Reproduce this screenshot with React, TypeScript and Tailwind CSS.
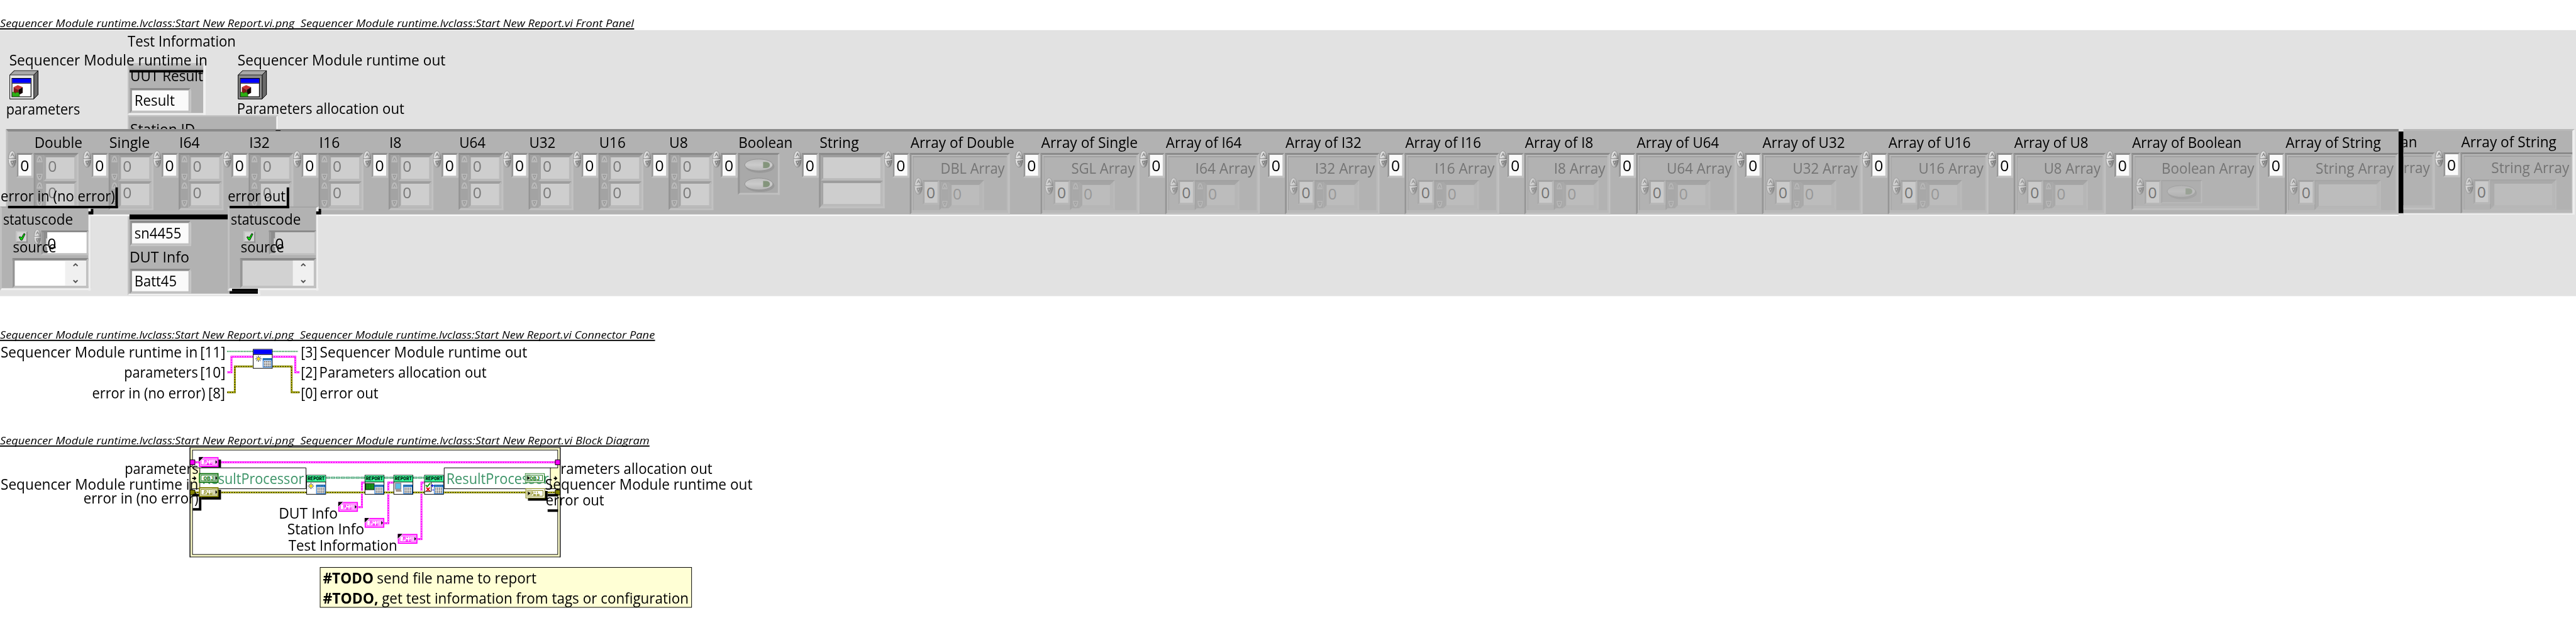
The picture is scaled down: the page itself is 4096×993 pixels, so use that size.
import { useLayoutEffect, useRef } from "react";
import type { ReactNode } from "react";

/** One line of text stretched to the width of its box. */
function Label({ at, children, tone = "text-black", font = "font-['Open_Sans',sans-serif] text-[23.5px]" }: { at: string; children: ReactNode; tone?: string; font?: string }) {
  const box = useRef<HTMLDivElement>(null);
  const ink = useRef<HTMLSpanElement>(null);
  useLayoutEffect(() => {
    if (box.current && ink.current) {
      const ratio = box.current.clientWidth / ink.current.offsetWidth;
      ink.current.style.transform = `scaleX(${ratio})`;
    }
  });
  return (
    <div ref={box} className={`h-[24px] shrink-0 whitespace-nowrap leading-[24px] ${font} ${tone} ${at}`}>
      <span ref={ink} className="inline-block origin-left">{children}</span>
    </div>
  );
}

function Title({ children, width }: { children: string; width: string }) {
  return (
    <div className={`${width} h-[20px] shrink-0 border-b-2 border-black`}>
      <Label at="w-full -mt-[3px]" font="font-['Open_Sans',sans-serif] italic text-[17.5px]">{children}</Label>
    </div>
  );
}

const SUNK = "border-t-[#8a8a8a] border-l-[#959595] border-r-[#c1c1c1] border-b-[#c1c1c1]";
const SUNK_SOFT = "border-t-[#9d9d9d] border-l-[#a5a5a5] border-r-[#bababa] border-b-[#bababa]";

function Spinner({ size = "w-[14px] h-[28px]" }: { size?: string }) {
  return (
    <svg viewBox="0 0 14 28" preserveAspectRatio="none" className={`${size} block shrink-0`}>
      <defs>
        <linearGradient id="spin" x1="0" x2="1" y1="0" y2="0.4">
          <stop offset="0" stopColor="#b5b5b5" />
          <stop offset="0.35" stopColor="#e2e2e2" />
          <stop offset="0.7" stopColor="#bdbdbd" />
          <stop offset="1" stopColor="#777" />
        </linearGradient>
      </defs>
      <ellipse cx="7" cy="14" rx="6.5" ry="13.5" fill="url(#spin)" stroke="#8b8b8b" strokeWidth="0.8" />
      <path d="M1 13.4H13" stroke="#777" />
      <path d="M1 14.6H13" stroke="#eee" />
      <path d="M4.5 10L7 4.5L9.5 10" fill="none" stroke="#6a6a6a" strokeWidth="1" />
      <path d="M4.5 10H9.5" stroke="#f4f4f4" strokeWidth="1" />
      <path d="M9.5 17.5L7 23L4.5 17.5Z" fill="none" stroke="#6a6a6a" strokeWidth="1" />
    </svg>
  );
}

function SplitSpinner({ size }: { size: string }) {
  return (
    <svg viewBox="0 0 14 44" preserveAspectRatio="none" className={`${size} block shrink-0`}>
      <rect width="14" height="44" fill="#a3a3a3" />
      <path d="M1 13Q2 1 7 1Q12 1 13 13Z" fill="#b9b9b9" stroke="#999" strokeWidth="0.6" />
      <path d="M1 31Q2 43 7 43Q12 43 13 31Z" fill="#b9b9b9" stroke="#999" strokeWidth="0.6" />
      <path d="M4.5 10L7 5L9.5 10" fill="none" stroke="#8e8e8e" />
      <path d="M4.5 34H9.5L7 39Z" fill="none" stroke="#8e8e8e" />
    </svg>
  );
}

function Switch() {
  return (
    <svg viewBox="0 0 50 24" className="block h-[24px] w-[50px]">
      <defs>
        <linearGradient id="pill" x1="0" x2="0" y1="0" y2="1">
          <stop offset="0" stopColor="#bcbcbc" />
          <stop offset="0.5" stopColor="#cbcbcb" />
          <stop offset="1" stopColor="#b4b4b4" />
        </linearGradient>
      </defs>
      <ellipse cx="26" cy="13" rx="23.5" ry="10.5" fill="#999" />
      <ellipse cx="24" cy="10.5" rx="22.8" ry="9.6" fill="url(#pill)" stroke="#929292" />
      <path d="M31 5.5H36Q42 6 42 10.5Q42 15 36 15.5H31Z" fill="#84957c" />
    </svg>
  );
}

function Index() {
  return (
    <>
      <div className="-mt-[4px]"><Spinner /></div>
      <div className={`flex h-[40px] w-[27px] shrink-0 border-[3px] ${SUNK} bg-[#fafafa] pl-[3px] pt-[6px]`}>
        <Label at="w-[14px]">0</Label>
      </div>
    </>
  );
}

function NumberRow() {
  return (
    <div className="flex h-[43px]">
      <SplitSpinner size="w-[13px] h-[43px]" />
      <div className={`h-[43px] w-[54px] border-[4px] ${SUNK_SOFT} bg-[#cecece] pl-[3px] pt-[3px]`}>
        <Label at="w-[14px]" tone="text-[#7a7a7a]">0</Label>
      </div>
    </div>
  );
}

function SubIndex() {
  return (
    <>
      <div className="-mt-[4px]"><Spinner /></div>
      <div className="h-[40px] w-[27px] shrink-0 border-[3px] border-t-[#9d9d9d] border-l-[#a5a5a5] border-r-[#bababa] border-b-[#bababa] bg-[#d4d4d4] pl-[3px] pt-[6px]">
        <Label at="w-[14px]" tone="text-[#5c5c5c]">0</Label>
      </div>
    </>
  );
}

type Kind = "num" | "bool" | "str" | "anum" | "abool" | "astr";

function Element({ kind, box, sub, subW }: { kind: Kind; box: string; sub?: string; subW?: string }) {
  if (kind === "num")
    return (
      <div className={`h-[93px] w-[73px] shrink-0 border-[3px] ${SUNK}`}>
        <NumberRow />
        <NumberRow />
      </div>
    );
  if (kind === "bool")
    return (
      <div className={`flex h-[68px] w-[68px] shrink-0 flex-col gap-[7px] border-[3px] ${SUNK} bg-[#a9a9a9] pl-[7px] pt-[6px]`}>
        <Switch />
        <Switch />
      </div>
    );
  if (kind === "str")
    return (
      <div className={`h-[90px] w-[107px] shrink-0 border-[3px] ${SUNK}`}>
        <div className={`h-[42px] w-full border-[4px] ${SUNK_SOFT} bg-[#cecece]`} />
        <div className={`h-[42px] w-full border-[4px] ${SUNK_SOFT} bg-[#cecece]`} />
      </div>
    );
  return (
    <div className={`${box} shrink-0 border-[3px] ${SUNK}`}>
      <div className="flex h-full w-full flex-col border-2 border-b-4 border-t-[#bbb] border-l-[#bbb] border-r-[#bbb] border-b-[#b8b8b8]">
        <div className="flex h-full flex-col border-t-2 border-l border-t-[#a0a0a0] border-l-[#a0a0a0]">
          <div className="flex justify-end pr-[3px] pt-[6px]">
            <Label at={subW ?? ""} tone="text-[#747474]">{sub}</Label>
          </div>
          <div className="mt-[7px] flex opacity-80">
            <div className="flex opacity-90 pl-[1px]"><SubIndex /></div>
            {kind === "anum" && (
              <div className="flex h-[49px] w-[73px] border-[3px] border-t-[#999] border-l-[#9d9d9d] border-r-[#bebebe] border-b-[#bbb] opacity-80">
                <SplitSpinner size="w-[12px] h-[43px]" />
                <div className={`h-[43px] w-[55px] border-[5px] ${SUNK_SOFT} bg-[#c2c2c2] pl-[2px] pt-[3px]`}>
                  <Label at="w-[14px]" tone="text-[#8a8a8a]">0</Label>
                </div>
              </div>
            )}
            {kind === "abool" && (
              <div className="h-[38px] w-[67px] border-2 border-t-[#a2a2a2] border-l-[#a2a2a2] border-r-[#bebebe] border-b-[#bbb] bg-[#adadad] pl-[7px] pt-[6px]">
                <div className="opacity-60"><Switch /></div>
              </div>
            )}
            {kind === "astr" && (
              <div className="h-[49px] w-[108px] border-2 border-t-[#a2a2a2] border-l-[#a2a2a2] border-r-[#bebebe] border-b-[#bbb]">
                <div className="h-full w-full border-[5px] border-t-[#a8a8a8] border-l-[#aaa] border-r-[#b8b8b8] border-b-[#b8b8b8] bg-[#bebebe]" />
              </div>
            )}
          </div>
        </div>
      </div>
    </div>
  );
}

interface CellSpec { name: string; w: string; lw: string; kind: Kind; box?: string; sub?: string; subW?: string }

const CELLS: CellSpec[] = [
  { name: "Double", w: "w-[122px]", lw: "w-[78px]", kind: "num" },
  { name: "Single", w: "w-[114px]", lw: "w-[66px]", kind: "num" },
  { name: "I64", w: "w-[114px]", lw: "w-[33px]", kind: "num" },
  { name: "I32", w: "w-[114px]", lw: "w-[33px]", kind: "num" },
  { name: "I16", w: "w-[114px]", lw: "w-[33px]", kind: "num" },
  { name: "I8", w: "w-[114px]", lw: "w-[20px]", kind: "num" },
  { name: "U64", w: "w-[114px]", lw: "w-[43px]", kind: "num" },
  { name: "U32", w: "w-[114px]", lw: "w-[43px]", kind: "num" },
  { name: "U16", w: "w-[114px]", lw: "w-[43px]", kind: "num" },
  { name: "U8", w: "w-[113px]", lw: "w-[31px]", kind: "num" },
  { name: "Boolean", w: "w-[132px]", lw: "w-[88px]", kind: "bool" },
  { name: "String", w: "w-[148px]", lw: "w-[64px]", kind: "str" },
  { name: "Array of Double", w: "w-[213px]", lw: "w-[169px]", kind: "anum", box: "h-[100px] w-[163px]", sub: "DBL Array", subW: "w-[105px]" },
  { name: "Array of Single", w: "w-[203px]", lw: "w-[157px]", kind: "anum", box: "h-[100px] w-[161px]", sub: "SGL Array", subW: "w-[103px]" },
  { name: "Array of I64", w: "w-[195px]", lw: "w-[124px]", kind: "anum", box: "h-[100px] w-[154px]", sub: "I64 Array", subW: "w-[97px]" },
  { name: "Array of I32", w: "w-[195px]", lw: "w-[124px]", kind: "anum", box: "h-[100px] w-[154px]", sub: "I32 Array", subW: "w-[97px]" },
  { name: "Array of I16", w: "w-[195px]", lw: "w-[124px]", kind: "anum", box: "h-[100px] w-[154px]", sub: "I16 Array", subW: "w-[97px]" },
  { name: "Array of I8", w: "w-[182px]", lw: "w-[111px]", kind: "anum", box: "h-[100px] w-[140px]", sub: "I8 Array", subW: "w-[84px]" },
  { name: "Array of U64", w: "w-[205px]", lw: "w-[134px]", kind: "anum", box: "h-[100px] w-[164px]", sub: "U64 Array", subW: "w-[106px]" },
  { name: "Array of U32", w: "w-[205px]", lw: "w-[134px]", kind: "anum", box: "h-[100px] w-[164px]", sub: "U32 Array", subW: "w-[106px]" },
  { name: "Array of U16", w: "w-[205px]", lw: "w-[134px]", kind: "anum", box: "h-[100px] w-[164px]", sub: "U16 Array", subW: "w-[106px]" },
  { name: "Array of U8", w: "w-[192px]", lw: "w-[121px]", kind: "anum", box: "h-[100px] w-[150px]", sub: "U8 Array", subW: "w-[93px]" },
  { name: "Array of Boolean", w: "w-[250px]", lw: "w-[178px]", kind: "abool", box: "h-[93px] w-[208px]", sub: "Boolean Array", subW: "w-[151px]" },
  { name: "Array of String", w: "w-[228px]", lw: "w-[155px]", kind: "astr", box: "h-[100px] w-[185px]", sub: "String Array", subW: "w-[127px]" },
];

function Cell({ cell }: { cell: CellSpec }) {
  return (
    <div className={`${cell.w} flex shrink-0 flex-col`}>
      <Label at={`${cell.lw} ml-[43px] mt-[6px]`}>{cell.name}</Label>
      <div className="mt-[5px] flex">
        <Index />
        <div className="w-px shrink-0" />
        <Element kind={cell.kind} box={cell.box ?? ""} sub={cell.sub} subW={cell.subW} />
      </div>
    </div>
  );
}

function ParameterStrip() {
  return (
    <div className="absolute left-[10px] top-[161px] flex h-[142px] w-[4186px]">
      <div className="flex h-[142px] w-[3897px] shrink-0 overflow-hidden border-l-[3px] border-t-4 border-b-[3px] border-l-[#bdbdbd] border-t-[#8a8a8a] border-b-[#f8f8f8] bg-[#b2b2b2]">
        {CELLS.map((c) => <Cell key={c.name} cell={c} />)}
      </div>
      <div className="mt-[4px] h-[133px] w-[8px] shrink-0 bg-black" />
      <div className="h-[140px] w-[279px] shrink-0 overflow-hidden border-r-4 border-t-[3px] border-b-[3px] border-t-[#b9b9b9] border-r-[#efefef] border-b-[#f0f0f0] bg-[#b2b2b2]">
        <div className="-ml-[199px] flex">
          <Cell cell={CELLS[22]} />
          <Cell cell={CELLS[23]} />
        </div>
      </div>
    </div>
  );
}

function CubeIcon({ face }: { face: string }) {
  return (
    <svg viewBox="0 0 48 48" className="block h-[48px] w-[48px]">
      <path d="M1 8L8 1H47V40L40 47H1Z" fill="#777" stroke="#000" />
      <path d="M2 8L9 1.5H46L40 8Z" fill="#a8a8a8" />
      <path d="M40 8L47 1V40L40 47Z" fill="#6b6b6b" stroke="#000" />
      <path d="M1 8H40V47H1Z" fill={face} stroke="#000" strokeWidth="0.8" />
      <path d="M4.500 13.500H35.500V43.500H4.500Z" fill="#fff" stroke="#000" strokeWidth="1.200" />
      <path d="M5 14H35V21H5Z" fill="#00f" />
      <path d="M5 21.500H35" stroke="#000" strokeWidth="1.200" />
      <path d="M7 28L14 24.500L22 28L15 32Z" fill="#c83232" />
      <path d="M7 28L15 32V40L7 37Z" fill="#861a1a" />
      <path d="M15 32L22 28V37L15 41Z" fill="#160505" />
      <path d="M5 36H8L10 38L12 36L16 37L17 43H5Z" fill="#2db014" stroke="#0a5a00" strokeWidth="0.600" />
    </svg>
  );
}

function Check() {
  return (
    <div className="flex h-[19px] w-[19px] items-center justify-center border-2 border-t-[#c2c2c2] border-l-[#c2c2c2] border-r-[#8f8f8f] border-b-[#8f8f8f] bg-[#d4d4d4]">
      <svg viewBox="0 0 12 13" className="h-[13px] w-[12px]">
        <path d="M1 7L3 6L5 8L9 1L11 2L6 12H4Z" fill="#00e000" stroke="#000" strokeWidth="0.9" />
      </svg>
    </div>
  );
}

function ScrollColumn() {
  return (
    <div className="flex h-full w-[34px] flex-col items-center justify-between bg-[#f0f0f0] py-[4px]">
      <svg viewBox="0 0 8 6" className="h-[6px] w-[8px]"><path d="M0.500 5L4 1.500L7.500 5" fill="none" stroke="#505050" strokeWidth="2" /></svg>
      <svg viewBox="0 0 8 6" className="h-[6px] w-[8px]"><path d="M0.500 1L4 4.500L7.500 1" fill="none" stroke="#505050" strokeWidth="2" /></svg>
    </div>
  );
}

function ErrorCluster({ at, fill, spinner }: { at: string; fill: string; spinner: boolean }) {
  return (
    <div className={`absolute h-[137px] w-[148px] border-l-[3px] border-r-4 border-b-4 border-t-2 border-l-[#c2c2c2] border-t-[#a5a5a5] border-r-[#efefef] border-b-[#efefef] bg-[#b2b2b2] ${at}`}>
      <div className="relative h-full w-full">
        <Label at="absolute left-[2px] top-[7px] w-[62px]">status</Label>
        <Label at="absolute left-[64px] top-[7px] w-[52px]">code</Label>
        <div className="absolute left-[23px] top-[38px]"><Check /></div>
        {spinner && <div className="absolute left-[52px] top-[35px]"><Spinner size="w-[12px] h-[25px]" /></div>}
        <div className={`absolute left-[64px] top-[37px] flex h-[40px] w-[77px] border-[3px] ${SUNK} ${fill}`}>
          <div className="flex h-full w-[7px] items-center justify-end bg-[#8d8d8d]">
            <div className="h-[14px] w-[2px] bg-[#d8d8d8]" />
          </div>
          <Label at="mt-[7px] w-[14px]">0</Label>
        </div>
        <div className={`absolute left-[17px] top-[82px] flex h-[49px] w-[124px] justify-end border-[4px] ${SUNK} ${fill}`}>
          <ScrollColumn />
        </div>
        <Label at="absolute left-[18px] top-[52px] w-[71px]">source</Label>
      </div>
    </div>
  );
}

function Field({ at, children }: { at: string; children: ReactNode }) {
  return <div className={`absolute h-[41px] w-[99px] border-[4px] border-l-[3px] ${SUNK} bg-[#fafafa] pl-[4px] pt-[4px] ${at}`}>{children}</div>;
}

/** The panel's free canvas; its origin is at y = 49 of the page. */
function FrontPanel() {
  return (
    <div className="relative h-[433px] w-[4196px] shrink-0 overflow-hidden bg-[#e2e2e2]">
      <div className="absolute left-[208px] top-[54px] h-[84px] w-[127px] border-r-4 border-b-[3px] border-l-2 border-l-[#c4c4c4] border-r-[#f1f1f1] border-b-[#f1f1f1] bg-[#b2b2b2]">
        <Label at="absolute left-[2px] top-[8px] w-[119px]">UUT Result</Label>
        <div className="absolute left-0 top-0 h-[11px] w-[121px] bg-linear-to-b from-[#c8c8c8] to-[#a8a8a8]" />
        <div className="absolute left-px top-[11px] h-[4px] w-[120px] bg-black" />
      </div>
      <Field at="left-[212px] top-[94px]"><Label at="w-[66px]">Result</Label></Field>
      <div className="absolute left-[208px] top-[139px] h-[26px] w-[245px] border-l-2 border-r-[3px] border-t-2 border-l-[#c4c4c4] border-t-[#c0c0c0] border-r-[#f1f1f1] bg-[#b2b2b2]">
        <Label at="absolute left-[2px] top-[8px] w-[106px]">Station ID</Label>
      </div>

      <Label at="absolute left-[208px] top-[6px] w-[176px]">Test Information</Label>
      <Label at="absolute left-[15px] top-[37px] w-[323px]">Sequencer Module runtime in</Label>
      <Label at="absolute left-[387px] top-[37px] w-[339px]">Sequencer Module runtime out</Label>
      <Label at="absolute left-[10px] top-[116px] w-[120px]">parameters</Label>
      <Label at="absolute left-[386px] top-[115px] w-[273px]">Parameters allocation out</Label>
      <div className="absolute left-[15px] top-[65px]"><CubeIcon face="#e6e6e6" /></div>
      <div className="absolute left-[387px] top-[65px]"><CubeIcon face="#8b8b8b" /></div>

      <div className="absolute left-[208px] top-[300px] h-[132px] w-[216px] border-l-2 border-r-4 border-b-[3px] border-l-[#c4c4c4] border-r-[#f1f1f1] border-b-[#f1f1f1] bg-[#b2b2b2]" />
      <Field at="left-[212px] top-[310px]"><Label at="w-[76px]">sn4455</Label></Field>
      <Label at="absolute left-[211px] top-[357px] w-[97px]">DUT Info</Label>
      <Field at="left-[212px] top-[388px]"><Label at="w-[69px]">Batt45</Label></Field>

      <ParameterStrip />
      <div className="absolute left-[449px] top-[163px] h-px w-[8px] bg-black" />
      <div className="absolute left-[211px] top-[300px] h-[8px] w-[163px] bg-black" />

      <ErrorCluster at="left-0 top-[287px]" fill="bg-white" spinner />
      <ErrorCluster at="left-[371px] top-[287px]" fill="bg-[#d2d2d2]" spinner={false} />
      <Label at="absolute left-px top-[258px] w-[186px]">error in (no error)</Label>
      <Label at="absolute left-[371px] top-[258px] w-[94px]">error out</Label>
      <div className="absolute left-[188px] top-[256px] h-[34px] w-[4px] bg-black" />
      <div className="absolute left-[13px] top-[286px] h-[4px] w-[179px] bg-black" />
      <div className="absolute left-[467px] top-[256px] h-[34px] w-[4px] bg-black" />
      <div className="absolute left-[374px] top-[286px] h-[4px] w-[97px] bg-black" />
      <div className="absolute left-[144px] top-[295px] h-[5px] w-[8px] bg-black" />
      <div className="absolute left-[148px] top-[291px] h-[5px] w-[4px] bg-black" />
      <div className="absolute left-[515px] top-[295px] h-[5px] w-[8px] bg-black" />
      <div className="absolute left-[519px] top-[291px] h-[5px] w-[4px] bg-black" />
      <div className="absolute left-[378px] top-[421px] h-[4px] w-[42px] bg-black" />
      <div className="absolute left-[374px] top-[425px] h-[4px] w-[46px] bg-black" />
    </div>
  );
}

function Pink({ d }: { d: string }) {
  return (
    <g fill="none">
      <path d={d} stroke="#f0f" strokeWidth="3" />
      <path d={d} stroke="#fff" strokeWidth="1" strokeDasharray="2 2" />
    </g>
  );
}

function Olive({ d }: { d: string }) {
  return (
    <g fill="none">
      <path d={d} stroke="#808000" strokeWidth="3" />
      <path d={d} stroke="#ffff00" strokeWidth="1" />
      <path d={d} stroke="#000" strokeWidth="1" strokeDasharray="2 2" />
    </g>
  );
}

function Green({ d }: { d: string }) {
  return (
    <g fill="none">
      <path d={d} stroke="#339966" strokeWidth="3" strokeDasharray="7 1" />
      <path d={d} stroke="#d8f0e4" strokeWidth="1" strokeDasharray="5 3" strokeDashoffset="-1" />
    </g>
  );
}

function Sheet({ x, y }: { x: number; y: number }) {
  return (
    <g transform={`translate(${x} ${y})`}>
      <rect x="0.5" y="0.5" width="14" height="14" fill="#fff" stroke="#0060c8" />
      <rect width="15" height="3.5" fill="#0060c8" />
      <path d="M1.500 1.500H13" stroke="#f5c518" strokeDasharray="1 1.500" />
      <path d="M2 5.500H13M2 8H13M2 10.500H13M2 13H13" stroke="#000" strokeDasharray="2 1" />
    </g>
  );
}

function Spark({ x, y }: { x: number; y: number }) {
  return (
    <g transform={`translate(${x} ${y})`}>
      <path d="M0 5H10M5 0V10M1.500 1.500L8.500 8.500M8.500 1.500L1.500 8.500" stroke="#000" strokeWidth="0.900" />
      <circle cx="5" cy="5" r="2.200" fill="#ffe800" />
    </g>
  );
}

function Report({ x, children }: { x: number; children: ReactNode }) {
  return (
    <g transform={`translate(${x} 773)`}>
      <rect x="0.5" y="0.5" width="31" height="31" fill="#fff" stroke="#000" />
      <rect x="1" y="1" width="30" height="10.500" fill="#33ff99" />
      <path d="M0 11.500H32" stroke="#000" />
      <text x="2" y="8.600" fontFamily="Liberation Mono, monospace" fontWeight="700" fontSize="8.500" textLength="28" lengthAdjust="spacingAndGlyphs">REPORT</text>
      {children}
      <Sheet x={16} y={16} />
    </g>
  );
}

function ClusterTerminal({ x, y, color, soft, corner, out }: { x: number; y: number; color: string; soft: string; corner?: boolean; out?: boolean }) {
  return (
    <g transform={`translate(${x} ${y})`}>
      <rect x={out ? 0.5 : 1} y={out ? 0.5 : 1} width={out ? 31 : 30} height={out ? 15 : 14} fill="#fff" stroke={color} strokeWidth={out ? 1 : 2} />
      <rect x="3.500" y="3.500" width="25" height="9" fill="#fff" stroke={color} />
      <g fill="none" stroke={color}>
        <path d="M9 5.500H12V8H9ZM14 6H17M7.500 10H11M13.500 9.500H16V11.500H13.500ZM19.500 5V7.500M19 9.500H22V11.500H19Z" strokeWidth="1.100" />
      </g>
      <rect x={out ? 1 : 21} y="2" width="9" height="12" fill={soft} opacity="0.750" />
      <path d={out ? "M4 5L8 8L4 11Z" : "M27 5L30 8L27 11Z"} fill="#000" />
      {corner && <path d="M0 0H8L0 8Z" fill="#000" />}
      {corner && <path d="M8 0L0 8" stroke="#fff" />}
    </g>
  );
}

function ObjTerminal({ x, y, out }: { x: number; y: number; out?: boolean }) {
  return (
    <g transform={`translate(${x} ${y})`}>
      <rect x={out ? 0.5 : 1} y={out ? 0.5 : 1} width={out ? 31 : 30} height={out ? 15 : 14} fill="#fff" stroke="#0a700a" strokeWidth={out ? 1 : 2} />
      <rect x="3.500" y="3.500" width="25" height="9" fill="#fff" stroke="#0a700a" />
      <text x="7.500" y="11.300" fill="#0a700a" fontFamily="Liberation Mono, monospace" fontWeight="700" fontSize="9.500" textLength="17" lengthAdjust="spacingAndGlyphs">OBJ</text>
      <rect x={out ? 1 : 22} y="2" width="8" height="12" fill="#7fae7f" opacity="0.600" />
      <path d={out ? "M4 5L8 8L4 11Z" : "M27 5L30 8L27 11Z"} fill="#000" />
    </g>
  );
}

/** Origin at y = 555 of the page. */
function ConnectorPane() {
  return (
    <div className="relative h-[152px] w-[1100px] shrink-0">
      <svg viewBox="360 555 140 152" className="absolute left-[360px] top-0 h-[152px] w-[140px]">
        <path d="M370 572H412M444 572H485" stroke="#00802b" strokeWidth="2" strokeDasharray="1.500 1" />
        <Pink d="M370 606H377V580.500H412" />
        <Pink d="M444 580.500H481V606H488" />
        <Olive d="M370 638.500H382.500V596.500H412" />
        <Olive d="M444 596.500H475V638.500H488" />
        <rect x="412.500" y="568.500" width="31" height="31" fill="#fff" stroke="#000" />
        <rect x="413" y="569" width="30" height="7.500" fill="#00f" />
        <path d="M412 577H444" stroke="#000" />
        <Spark x={416} y={579} />
        <Sheet x={428} y={583} />
      </svg>
      <Label at="absolute left-px top-[6px] w-[321px]">Sequencer Module runtime in</Label>
      <Label at="absolute left-[326px] top-[6px] w-[41px]">[11]</Label>
      <Label at="absolute left-[202px] top-[39px] w-[120px]">parameters</Label>
      <Label at="absolute left-[326px] top-[39px] w-[41px]">[10]</Label>
      <Label at="absolute left-[150px] top-[72px] w-[184px]">error in (no error)</Label>
      <Label at="absolute left-[339px] top-[72px] w-[28px]">[8]</Label>
      <Label at="absolute left-[490px] top-[6px] w-[27px]">[3]</Label>
      <Label at="absolute left-[521px] top-[6px] w-[338px]">Sequencer Module runtime out</Label>
      <Label at="absolute left-[490px] top-[39px] w-[27px]">[2]</Label>
      <Label at="absolute left-[520px] top-[39px] w-[273px]">Parameters allocation out</Label>
      <Label at="absolute left-[490px] top-[72px] w-[27px]">[0]</Label>
      <Label at="absolute left-[521px] top-[72px] w-[95px]">error out</Label>
    </div>
  );
}

/** Origin at y = 727 of the page. */
function BlockDiagram() {
  return (
    <div className="relative h-[290px] w-[1300px] shrink-0">
      <svg viewBox="300 727 620 190" className="absolute left-[300px] top-0 h-[190px] w-[620px]">
        <rect x="309.500" y="728.500" width="603" height="178" fill="#ffffcc" stroke="#000" />
        <rect x="313.500" y="732.500" width="595" height="170" fill="#fff" stroke="#000" />
        <path d="M310 761.500H325.500V795.500H310ZM896.500 761.500H912V795.500H896.500Z" fill="#ffffcc" />
        <path d="M313 761.500H498.500V795.500H313M325.500 761V796" fill="none" stroke="#000" />
        <path d="M909 761.500H723.500V795.500H909M896.500 761V796" fill="none" stroke="#000" />
        <path d="M309.500 728V907M912.500 728V907" stroke="#000" />
        <path d="M313 777.500H316V774.500L320 778.500L316 782.500V779.500H313ZM902 777.500H904V774.500L908 778.500L904 782.500V779.500H902Z" fill="#000" />

        <Pink d="M317 752.500H905" />
        <Olive d="M317 801.500H905" />
        <Green d="M531 777.500H594" />
        <Green d="M626 777.500H641" />
        <Green d="M673 777.500H691" />
        <Pink d="M583 825.500H589.500V804" />
        <Pink d="M589.500 799V785.500H594" />
        <Pink d="M626 851.500H632.500V804" />
        <Pink d="M632.500 799V785.500H641" />
        <Pink d="M680 877.500H686.500V804" />
        <Pink d="M686.500 799V785.500H691" />
        <path d="M309.500 748.500H317.500V756.500H309.500ZM904.500 748.500H912.500V756.500H904.500Z" fill="#f0f" stroke="#000" />
        <path d="M309.500 797.500H317.500V805.500H309.500ZM904.500 797.500H912.500V805.500H904.500Z" fill="#808000" stroke="#000" />

        <path d="M314 804H328V831H314V827H324V808H314Z" fill="#000" />
        <path d="M328 748H360V761H328Z" fill="#000" />
        <path d="M328 797H360V813H328Z" fill="#000" />
        <path d="M860 799H892V815H860Z" fill="#000" />
        <path d="M892 804H909V808H892ZM892 829H909V833H892Z" fill="#000" />

        <Report x={499}><Spark x={2.5} y={13} /></Report>
        <Report x={594}>
          <rect x="1.500" y="14" width="14" height="10" fill="#1ea01e" stroke="#000" />
          <path d="M3 16.500H14M3 19H14M3 21.500H14" stroke="#003c00" strokeDasharray="1.500 1.200" />
        </Report>
        <Report x={641}>
          <rect x="3" y="13.500" width="9" height="9.500" fill="#58bfe8" stroke="#8a8a9c" strokeWidth="1.400" />
          <path d="M4 24H12L13 27H4Z" fill="#b0988c" stroke="#776" strokeWidth="0.500" />
        </Report>
        <Report x={691}>
          <path d="M11.500 12V27H1" fill="none" stroke="#000" />
          <path d="M2.500 16.500L5 19L9.500 13.500" fill="none" stroke="#00a000" strokeWidth="2" />
          <path d="M3.500 20.500L9 26.500M9 20.500L3.500 26.500" stroke="#e00000" strokeWidth="1.800" />
          <path d="M11 17.500H16M13.500 15V20M13 24.500H16" stroke="#0000e0" strokeWidth="1.200" />
        </Report>
      </svg>
      <Label at="absolute left-[329px] top-[40px] w-[166px]" tone="text-[#3d9468]">ResultProcessor</Label>
      <Label at="absolute left-[727px] top-[40px] w-[167px]" tone="text-[#3d9468]">ResultProcessor</Label>
      <svg viewBox="300 727 620 190" className="absolute left-[300px] top-0 h-[190px] w-[620px]">
        <ClusterTerminal x={324} y={744} color="#ff00ff" soft="#ff99ff" corner />
        <ObjTerminal x={324} y={770} />
        <ClusterTerminal x={324} y={793} color="#808000" soft="#c8c890" />
        <ClusterTerminal x={551} y={817} color="#ff00ff" soft="#ff99ff" corner />
        <ClusterTerminal x={594} y={843} color="#ff00ff" soft="#ff99ff" corner />
        <ClusterTerminal x={648} y={869} color="#ff00ff" soft="#ff99ff" corner />
        <ObjTerminal x={855} y={770} out />
        <ClusterTerminal x={856} y={795} color="#808000" soft="#c8c890" out />
      </svg>
      <Label at="absolute left-[203px] top-[23px] w-[120px]">parameters</Label>
      <Label at="absolute left-px top-[49px] w-[322px]">Sequencer Module runtime in</Label>
      <Label at="absolute left-[136px] top-[72px] w-[187px]">error in (no error)</Label>
      <Label at="absolute left-[454px] top-[96px] w-[96px]">DUT Info</Label>
      <Label at="absolute left-[468px] top-[122px] w-[125px]">Station Info</Label>
      <Label at="absolute left-[470px] top-[148px] w-[177px]">Test Information</Label>
      <Label at="absolute left-[913px] top-[23px] w-[247px]">rameters allocation out</Label>
      <Label at="absolute left-[888px] top-[49px] w-[338px]">Sequencer Module runtime out</Label>
      <Label at="absolute left-[889px] top-[75px] w-[95px]">error out</Label>

      <div className="absolute left-[521px] top-[196px] flex h-[66px] w-[606px] flex-col gap-[8px] border border-black bg-[#ffffd5] pl-[4px] pt-[5px]">
        <div className="flex">
          <Label at="w-[83px]" font="font-['Open_Sans',sans-serif] text-[23.5px] font-bold">#TODO</Label>
          <Label at="w-[260px] ml-[5px]">send file name to report</Label>
        </div>
        <div className="flex">
          <Label at="w-[90px]" font="font-['Open_Sans',sans-serif] text-[23.5px] font-bold">#TODO,</Label>
          <Label at="w-[500px] ml-[6px]">get test information from tags or configuration</Label>
        </div>
      </div>
    </div>
  );
}

export default function App() {
  return (
    <div className="h-[993px] w-[4096px] overflow-hidden bg-white">
      <div className="flex h-[1017px] w-[4196px] origin-top-left scale-[0.97617] flex-col pt-[28px]">
        <Title width="w-[1033px]">Sequencer Module runtime.lvclass:Start New Report.vi.png&nbsp; Sequencer Module runtime.lvclass:Start New Report.vi Front Panel</Title>
        <div className="h-px shrink-0" />
        <FrontPanel />
        <div className="h-[53px] shrink-0" />
        <Title width="w-[1067px]">Sequencer Module runtime.lvclass:Start New Report.vi.png&nbsp; Sequencer Module runtime.lvclass:Start New Report.vi Connector Pane</Title>
        <ConnectorPane />
        <Title width="w-[1058px]">Sequencer Module runtime.lvclass:Start New Report.vi.png&nbsp; Sequencer Module runtime.lvclass:Start New Report.vi Block Diagram</Title>
        <BlockDiagram />
      </div>
    </div>
  );
}
